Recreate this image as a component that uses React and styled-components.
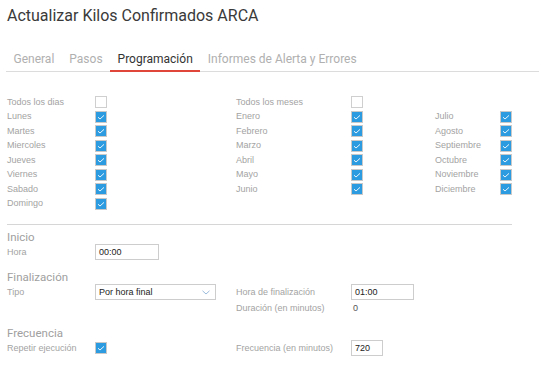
import React from "react";
import styled, { createGlobalStyle } from "styled-components";

const Global = createGlobalStyle`
  html, body { margin: 0; padding: 0; background: #fff; }
  body { font-family: "Liberation Sans", Arial, sans-serif; }
  * { box-sizing: border-box; }
`;

const Page = styled.div`
  width: 539px;
  height: 388px;
  padding: 6px 0 0 7px;
  overflow: hidden;
`;

const Title = styled.h1`
  margin: 0;
  font-family: Roboto, "Liberation Sans", sans-serif;
  font-weight: 400;
  font-size: 16px;
  line-height: 20px;
  color: #3a3a3a;
`;

const TabBar = styled.div`
  display: flex;
  margin: 20px 0 0 -1px;
  height: 26px;
  border-bottom: 1px solid #dcdcdc;
`;

const Tab = styled.div`
  padding: 2px 7.5px 0;
  height: 26px;
  display: flex;
  align-items: center;
  font-family: Roboto, "Liberation Sans", sans-serif;
  font-size: 12px;
  color: ${(p) => (p.$active ? "#333" : "#b0b0b0")};
  border-bottom: 2px solid ${(p) => (p.$active ? "#e0463a" : "transparent")};
  margin-bottom: -1px;
`;

const Checks = styled.div`
  display: flex;
  margin-top: 23px;
`;

const Group = styled.div`
  display: grid;
  grid-template-columns: ${(p) => p.$label}px 12px;
  grid-auto-rows: 14.5px;
  align-items: center;
  margin-top: ${(p) => p.$offset || 0}px;
  margin-right: ${(p) => p.$gap}px;
`;

const Label = styled.span`
  font-size: 9px;
  line-height: 11px;
  color: #a3a3a3;
  white-space: nowrap;
`;

const Box = styled.span`
  width: 12px;
  height: 12px;
  display: block;
  border: 1px solid ${(p) => (p.$on ? "#c9c9c9" : "#cfcfcf")};
  background: ${(p) => (p.$on ? "#2c9be0" : "#fff")};
  position: relative;
  svg { position: absolute; left: 1px; top: 1px; }
`;

const Check = ({ on }) => (
  <Box $on={on}>
    {on && (
      <svg width="8" height="8" viewBox="0 0 8 8">
        <path d="M1 4.2 L3 6 L7 2.4" fill="none" stroke="#fff" strokeWidth="0.9" />
      </svg>
    )}
  </Box>
);

const Divider = styled.div`
  width: 505px;
  height: 1px;
  background: #d6d6d6;
  margin-top: 13px;
`;

const Heading = styled.div`
  font-family: Roboto, "Liberation Sans", sans-serif;
  font-size: 11.5px;
  line-height: 14px;
  color: #a0a0a0;
  margin-top: ${(p) => p.$top}px;
`;

const FormGrid = styled.div`
  display: grid;
  grid-template-columns: 88px 141px 115px auto;
  grid-auto-rows: 16px;
  align-items: center;
`;

const Input = styled.div`
  width: ${(p) => p.$w}px;
  height: 16px;
  border: 1px solid #cdcdcd;
  padding: 0 3px;
  display: flex;
  align-items: center;
  font-size: 9px;
  color: #222;
`;

const Select = styled(Input)`
  justify-content: space-between;
  padding-right: 5px;
`;

const Value = styled.span`
  font-size: 9px;
  color: #555;
  padding-left: 2px;
`;

const Chevron = () => (
  <svg width="8" height="5" viewBox="0 0 8 5">
    <path d="M0.5 0.8 L4 4 L7.5 0.8" fill="none" stroke="#8fb4d8" strokeWidth="0.9" />
  </svg>
);

const days = ["Lunes", "Martes", "Miercoles", "Jueves", "Viernes", "Sabado", "Domingo"];
const months1 = ["Enero", "Febrero", "Marzo", "Abril", "Mayo", "Junio"];
const months2 = ["Julio", "Agosto", "Septiembre", "Octubre", "Noviembre", "Diciembre"];

export default function App() {
  return (
    <Page>
      <Global />
      <Title>Actualizar Kilos Confirmados ARCA</Title>
      <TabBar>
        <Tab>General</Tab>
        <Tab>Pasos</Tab>
        <Tab $active>Programación</Tab>
        <Tab>Informes de Alerta y Errores</Tab>
      </TabBar>

      <Checks>
        <Group $label={88} $gap={129}>
          <Label>Todos los dias</Label>
          <Check on={false} />
          {days.map((d) => (
            <React.Fragment key={d}>
              <Label>{d}</Label>
              <Check on />
            </React.Fragment>
          ))}
        </Group>
        <Group $label={115} $gap={72}>
          <Label>Todos los meses</Label>
          <Check on={false} />
          {months1.map((d) => (
            <React.Fragment key={d}>
              <Label>{d}</Label>
              <Check on />
            </React.Fragment>
          ))}
        </Group>
        <Group $label={65} $gap={0} $offset={14.5}>
          {months2.map((d) => (
            <React.Fragment key={d}>
              <Label>{d}</Label>
              <Check on />
            </React.Fragment>
          ))}
        </Group>
      </Checks>

      <Divider />

      <Heading $top={5}>Inicio</Heading>
      <FormGrid>
        <Label>Hora</Label>
        <Input $w={64}>00:00</Input>
      </FormGrid>

      <Heading $top={10}>Finalización</Heading>
      <FormGrid>
        <Label>Tipo</Label>
        <Select $w={121}>
          <span>Por hora final</span>
          <Chevron />
        </Select>
        <Label>Hora de finalización</Label>
        <Input $w={63}>01:00</Input>
        <span />
        <span />
        <Label>Duración (en minutos)</Label>
        <Value>0</Value>
      </FormGrid>

      <Heading $top={10}>Frecuencia</Heading>
      <FormGrid>
        <Label>Repetir ejecución</Label>
        <Check on />
        <Label>Frecuencia (en minutos)</Label>
        <Input $w={32}>720</Input>
      </FormGrid>
    </Page>
  );
}
